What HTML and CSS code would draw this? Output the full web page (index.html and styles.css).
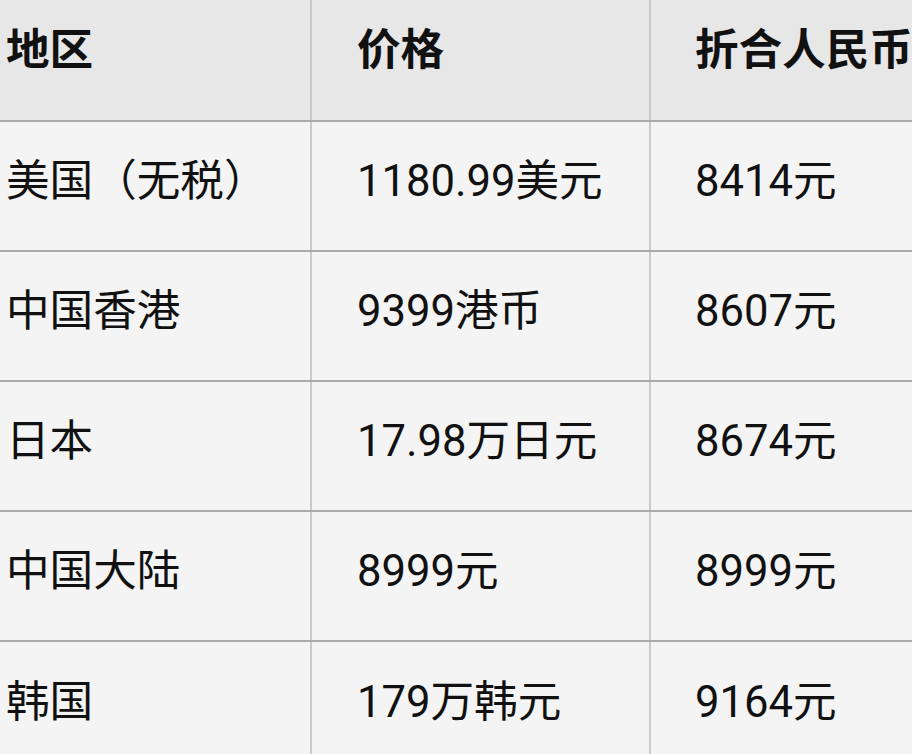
FILE: index.html
```html
<!DOCTYPE html>
<html lang="zh">
<head>
<meta charset="utf-8">
<link rel="stylesheet" href="styles.css">
</head>
<body>
<div class="table">
  <div class="row head">
    <div class="cell c1">地区</div>
    <div class="cell c2">价格</div>
    <div class="cell c3">折合人民币</div>
  </div>
  <div class="row">
    <div class="cell c1">美国（无税）</div>
    <div class="cell c2">1180.99美元</div>
    <div class="cell c3">8414元</div>
  </div>
  <div class="row">
    <div class="cell c1">中国香港</div>
    <div class="cell c2">9399港币</div>
    <div class="cell c3">8607元</div>
  </div>
  <div class="row">
    <div class="cell c1">日本</div>
    <div class="cell c2">17.98万日元</div>
    <div class="cell c3">8674元</div>
  </div>
  <div class="row">
    <div class="cell c1">中国大陆</div>
    <div class="cell c2">8999元</div>
    <div class="cell c3">8999元</div>
  </div>
  <div class="row last">
    <div class="cell c1">韩国</div>
    <div class="cell c2">179万韩元</div>
    <div class="cell c3">9164元</div>
  </div>
</div>
</body>
</html>
```

FILE: styles.css
```css
html, body {
  margin: 0;
  padding: 0;
  background: #f4f4f4;
  overflow: hidden;
  width: 912px;
  height: 754px;
}
body {
  font-family: Roboto, "Noto Sans CJK SC", sans-serif;
  font-size: 43.6px;
  color: #111;
}
.table {
  width: 1100px;
}
.row {
  display: grid;
  grid-template-columns: 312px 339px 449px;
  height: 130px;
  box-sizing: border-box;
  border-bottom: 2px solid #aaaaaa;
  background: #f4f4f4;
}
.row.head {
  height: 122px;
  background: #e7e7e7;
  font-weight: bold;
}
.row.last {
  height: 140px;
}
.cell {
  box-sizing: border-box;
  display: flex;
  align-items: center;
  white-space: nowrap;
  line-height: 1;
  padding-bottom: 8px;
}
.head .cell {
  padding-bottom: 18px;
}
.c1, .c2 {
  border-right: 2px solid #c9c9c9;
}
.c1 {
  padding-left: 6px;
}
.c2 {
  padding-left: 45px;
}
.c3 {
  padding-left: 44px;
}
.last .cell {
  padding-bottom: 16px;
}
```
